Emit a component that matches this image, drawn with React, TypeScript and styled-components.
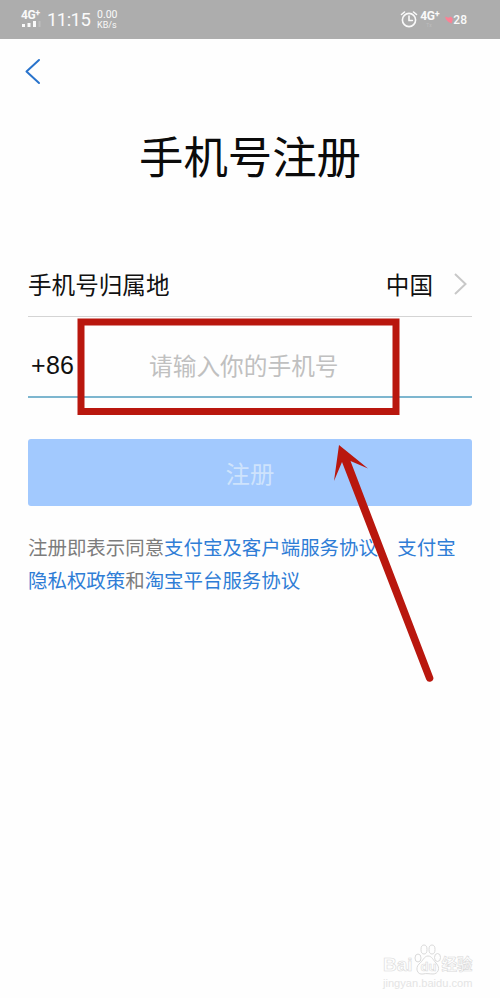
import React from 'react';
import styled, { createGlobalStyle } from 'styled-components';

const GlobalStyle = createGlobalStyle`
  * { box-sizing: border-box; }
  body {
    margin: 0;
    background: #fefefe;
    font-family: 'Noto Sans CJK SC', sans-serif;
  }
`;

const Screen = styled.div`
  position: relative;
  width: 500px;
  height: 998px;
  overflow: hidden;
  background: #fefefe;
`;

const StatusBar = styled.header`
  display: flex;
  justify-content: space-between;
  height: 39px;
  padding: 0 33px 0 21px;
  background: #adadad;
  color: #fafafa;
  font-family: Roboto, sans-serif;
`;

const StatusGroup = styled.div`
  display: flex;
  align-items: flex-start;
`;

const Signal = styled.div`
  display: flex;
  flex-direction: column;
  width: 21px;
  padding-top: 9px;
`;

const Network = styled.div<{ $size: number }>`
  display: flex;
  height: 12px;
  font-size: ${(p) => p.$size}px;
  line-height: 12px;
  font-weight: 700;
  letter-spacing: -0.4px;
  white-space: nowrap;

  sup {
    font-size: 9px;
    line-height: 8px;
    vertical-align: top;
  }
`;

const Clock = styled.time`
  margin: 10px 0 0 5px;
  width: 44px;
  font-size: 18.5px;
  line-height: 21px;
  letter-spacing: -0.55px;
  white-space: nowrap;
`;

const Speed = styled.div`
  margin: 10px 0 0 6px;
  font-size: 10.5px;
  line-height: 10px;
  white-space: nowrap;

  small {
    display: block;
    font-size: 9px;
    line-height: 10px;
  }
`;

const Cellular = styled.div`
  width: 20px;
  margin: 10px 0 0 2px;

  small {
    display: block;
    padding-left: 6px;
    font-size: 5px;
    line-height: 6px;
    color: #bdbdbd;
  }
`;

const Battery = styled.div`
  display: flex;
  align-items: center;
  margin: 13px 0 0 5px;
  font-size: 12px;
  line-height: 14px;
  font-weight: 500;
`;

const NavBar = styled.nav`
  display: flex;
  height: 67px;
  padding: 19px 0 0 24px;
`;

const Title = styled.h1`
  margin: 17px 0 0;
  padding-left: 139px;
  font-size: 44.4px;
  line-height: 64px;
  font-weight: 400;
  color: #0b0b0b;
  white-space: nowrap;
`;

const Form = styled.main`
  padding: 65px 28px 0;
`;

const Field = styled.div<{ $height: number; $line: string; $thickness?: number; $offset?: number }>`
  display: flex;
  align-items: center;
  height: ${(p) => p.$height}px;
  padding-top: ${(p) => p.$offset ?? 0}px;
  border-bottom: ${(p) => p.$thickness ?? 1}px solid ${(p) => p.$line};
  font-size: 23.6px;
  line-height: 34px;
  color: #111;
  white-space: nowrap;
`;

const Region = styled.span`
  margin-left: auto;
  margin-right: 20px;
`;

const DialCode = styled.span`
  width: 121px;
  padding-left: 3px;
  font-family: 'Liberation Sans', sans-serif;
  font-size: 25px;
  letter-spacing: 0.3px;
`;

const Placeholder = styled.span`
  font-size: 23.7px;
  color: #c0c0c0;
`;

const Submit = styled.button`
  display: block;
  width: 444px;
  height: 67px;
  margin: 41px 0 0;
  padding: 0;
  border: 0;
  border-radius: 3px;
  background: #a2c9fe;
  color: #cee3fc;
  font: 400 24.4px/67px 'Noto Sans CJK SC', sans-serif;
`;

const Terms = styled.p`
  margin: 25px 0 0;
  font-size: 19.45px;
  line-height: 32.5px;
  color: #7c7c7c;
  white-space: nowrap;
`;

const Link = styled.span`
  color: #2f7dd6;
`;

const Annotation = styled.svg`
  position: absolute;
  inset: 0;
  pointer-events: none;
`;

const Watermark = styled.div`
  position: absolute;
  left: 383px;
  top: 943px;
  width: 92px;
`;

const Brand = styled.div`
  display: flex;
  align-items: center;
  height: 34px;
  color: #fefefe;
  -webkit-text-stroke: 0.6px #dadada;
  font: 700 19px/22px 'Liberation Sans', 'Noto Sans CJK SC', sans-serif;

  svg { flex: none; }
`;

const Word = styled.span<{ $size: number }>`
  padding-top: 10px;
  font-size: ${(p) => p.$size}px;
  white-space: nowrap;
`;

const Site = styled.div`
  font: 11.1px/12px 'Liberation Sans', sans-serif;
  color: #e4e4e4;
  white-space: nowrap;
`;

export default function App() {
  return (
    <Screen>
      <GlobalStyle />
      <StatusBar>
        <StatusGroup>
          <Signal>
            <Network $size={12}>4G<sup>+</sup></Network>
            <svg width="21" height="7" viewBox="0 0 21 7" fill="#fafafa">
              <rect x="1" y="3" width="3" height="3" />
              <rect x="6.5" y="2" width="3" height="4" />
              <rect x="12" y="0" width="3" height="6" />
              <rect x="17.5" y="0" width="2" height="6" fill="#bdbdbd" />
            </svg>
          </Signal>
          <Clock>11:15</Clock>
          <Speed>0.00<small>KB/s</small></Speed>
        </StatusGroup>
        <StatusGroup>
          <svg width="18" height="30" viewBox="0 0 18 30" fill="none" stroke="#fafafa" strokeWidth="1.6" strokeLinecap="round">
            <circle cx="9" cy="20" r="6.6" />
            <path d="M9 16v4.5h3.4M1.5 14.5l3-2.5M16.5 14.5l-3-2.5" />
          </svg>
          <Cellular>
            <Network $size={12}>4G<sup>+</sup></Network>
            <small>Tx</small>
          </Cellular>
          <Battery>
            <svg width="8" height="10" viewBox="0 0 8 10" fill="#fb8195">
              <path d="M0 1.5l3.5 1.2L6 1.5 8 4 6.5 8.5 3.5 7 1 4.5z" />
            </svg>
            28
          </Battery>
        </StatusGroup>
      </StatusBar>
      <NavBar>
        <svg width="17" height="28" viewBox="0 0 17 28" fill="none" stroke="#2873cc" strokeWidth="2" strokeLinecap="round" strokeLinejoin="round">
          <path d="M15 2L2.5 13.5 15 25" />
        </svg>
      </NavBar>
      <Title>手机号注册</Title>
      <Form>
        <Field $height={65} $line="#d4d4d4">
          <span>手机号归属地</span>
          <Region>中国</Region>
          <svg width="19" height="24" viewBox="0 0 19 24" fill="none" stroke="#c8c8c8" strokeWidth="2">
            <path d="M2 2l10.5 10L2 22" />
          </svg>
        </Field>
        <Field $height={81} $line="#7db6cf" $thickness={2} $offset={16}>
          <DialCode>+86</DialCode>
          <Placeholder>请输入你的手机号</Placeholder>
        </Field>
        <Submit type="button">注册</Submit>
        <Terms>
          注册即表示同意<Link>支付宝及客户端服务协议</Link>、<Link>支付宝</Link>
          <br />
          <Link>隐私权政策</Link>和<Link>淘宝平台服务协议</Link>
        </Terms>
      </Form>
      <Annotation width="500" height="998" viewBox="0 0 500 998">
        <rect x="81" y="322" width="315" height="89.5" fill="none" stroke="#b9170e" strokeWidth="7" />
        <path d="M339 445L368 468.5 350.5 461 433 676.5A3.6 3.6 0 0 1 426.2 679.5L342 462 334 481z" fill="#b9170e" />
      </Annotation>
      <Watermark>
        <Brand>
          <Word $size={19}>Bai</Word>
          <svg width="29" height="34" viewBox="0 0 29 34" fill="#fefefe" stroke="#dadada" strokeWidth="1">
            <ellipse cx="5" cy="15" rx="3" ry="4" />
            <ellipse cx="11" cy="6.5" rx="3" ry="4.5" />
            <ellipse cx="19" cy="6.5" rx="3" ry="4.5" />
            <ellipse cx="24.5" cy="14.5" rx="3" ry="4" />
            <path d="M15 13c4 0 5 4 8 7 5 5 2 11-3 11-3 0-7-1-10 0-6 1-8-6-4-10 4-3 5-8 9-8z" />
            <text x="7.5" y="28" fontSize="13" fontWeight="700" strokeWidth="0.6">du</text>
          </svg>
          <Word $size={15.5}>经验</Word>
        </Brand>
        <Site>jingyan.baidu.com</Site>
      </Watermark>
    </Screen>
  );
}
